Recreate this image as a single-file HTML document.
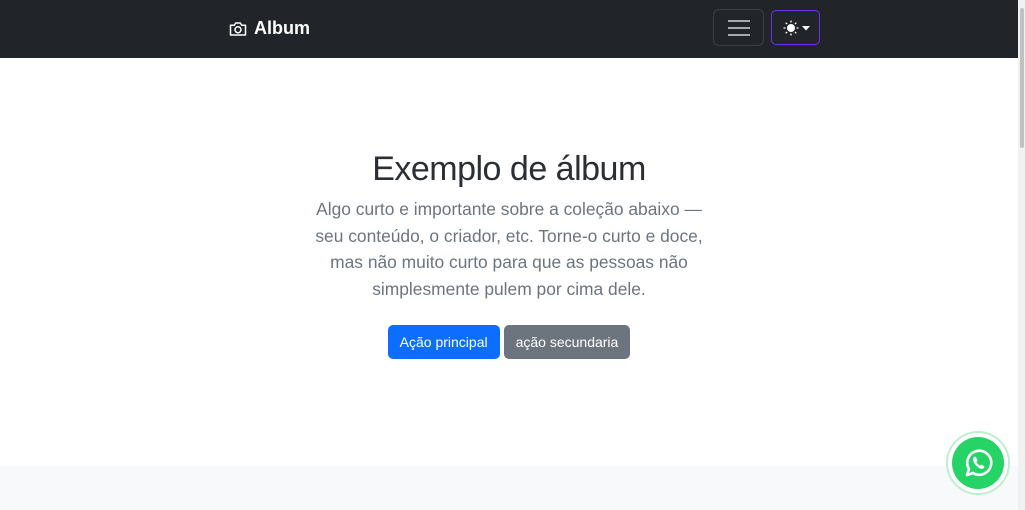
<!DOCTYPE html>
<html><head><meta charset="utf-8"><style>
*{box-sizing:border-box;margin:0;padding:0}
html,body{width:1025px;height:510px;overflow:hidden;background:#fff;font-family:"Liberation Sans",sans-serif}
.nav{position:absolute;left:0;top:0;width:1018px;height:58px;background:#212529}
.brand{position:absolute;left:229px;top:18px;color:#fff;font-weight:bold;font-size:18px;display:flex;align-items:center;gap:7px}
.tog{position:absolute;left:713px;top:9px;width:51px;height:37px;border:1px solid #3a3f44;border-radius:6px}
.tog span{position:absolute;left:14px;width:22px;height:2px;background:#a6a8aa}
.theme{position:absolute;left:771px;top:10px;width:49px;height:35px;border:1px solid #6f2cf3;border-radius:5px}
.sb{position:absolute;left:1018px;top:0;width:7px;height:510px;background:#f1f1f1}
.sb i{position:absolute;left:2px;top:8px;width:4px;height:140px;background:#c1c1c1;border-radius:2px}
.hero{position:absolute;left:0;top:58px;width:1018px;text-align:center}
h1{font-weight:300;font-size:34px;color:#2b2f33;margin-top:90px;line-height:42px;letter-spacing:-0.5px}
p{font-size:17.4px;color:#6c757d;line-height:26.7px;margin-top:6px;white-space:nowrap}
.btns{margin-top:22px;display:flex;justify-content:center;gap:4px}
.b{height:34px;line-height:34px;color:#fff;font-size:14px;border-radius:5px;padding:0 12px}
.foot{position:absolute;left:0;top:466px;width:1018px;height:44px;background:#f8f9fa}
.wa{position:absolute;left:946px;top:431px;width:64px;height:64px;border-radius:50%;border:2px solid #bfeecf;background:#fff}
.wa div{position:absolute;left:4px;top:4px;width:52px;height:52px;border-radius:50%;background:#25d366}
</style></head><body>
<div class="nav">
<div class="brand"><svg width="18" height="18" viewBox="0 0 24 24" fill="none" stroke="#fff" stroke-width="2" stroke-linejoin="round"><path d="M2 7h5l2-3h6l2 3h5v13H2z"/><circle cx="12" cy="13" r="4"/></svg>Album</div>
<div class="tog"><span style="top:10px"></span><span style="top:17px"></span><span style="top:24px"></span></div>
<div class="theme"><svg style="position:absolute;left:11px;top:9px" width="16" height="16" viewBox="0 0 16 16"><circle cx="8" cy="8" r="4" fill="#fff"/><g stroke="#fff" stroke-width="1.3"><path d="M8 0.5v2M8 13.5v2M0.5 8h2M13.5 8h2M2.7 2.7l1.4 1.4M11.9 11.9l1.4 1.4M2.7 13.3l1.4-1.4M11.9 4.1l1.4-1.4"/></g></svg><svg style="position:absolute;left:30px;top:15px" width="8" height="5"><path d="M0 0h8L4 4.5z" fill="#fff"/></svg></div>
</div>
<div class="hero">
<h1>Exemplo de álbum</h1>
<p>Algo curto e importante sobre a coleção abaixo —<br>seu conteúdo, o criador, etc. Torne-o curto e doce,<br>mas não muito curto para que as pessoas não<br>simplesmente pulem por cima dele.</p>
<div class="btns"><div class="b" style="background:#0d6efd">Ação principal</div><div class="b" style="background:#6c757d">ação secundaria</div></div>
</div>
<div class="foot"></div>
<div class="wa"><div><svg style="position:absolute;left:11px;top:11px" width="30" height="30" viewBox="0 0 30 30" fill="none" stroke="#fff" stroke-width="2.6"><path d="M4 27l2-6A12 12 0 1 1 10 25z" stroke-linejoin="round"/><path d="M11 9.5c-1 1-1 3 1 6s5 5 7 5c1 0 2-1 2-2l-2.5-1.5-1.5 1c-1.5-.5-3.5-2.5-4-4l1-1.5L12.5 9z" fill="#fff" stroke-width="0.8"/></svg></div></div>
<div class="sb"><i></i></div>
</body></html>
